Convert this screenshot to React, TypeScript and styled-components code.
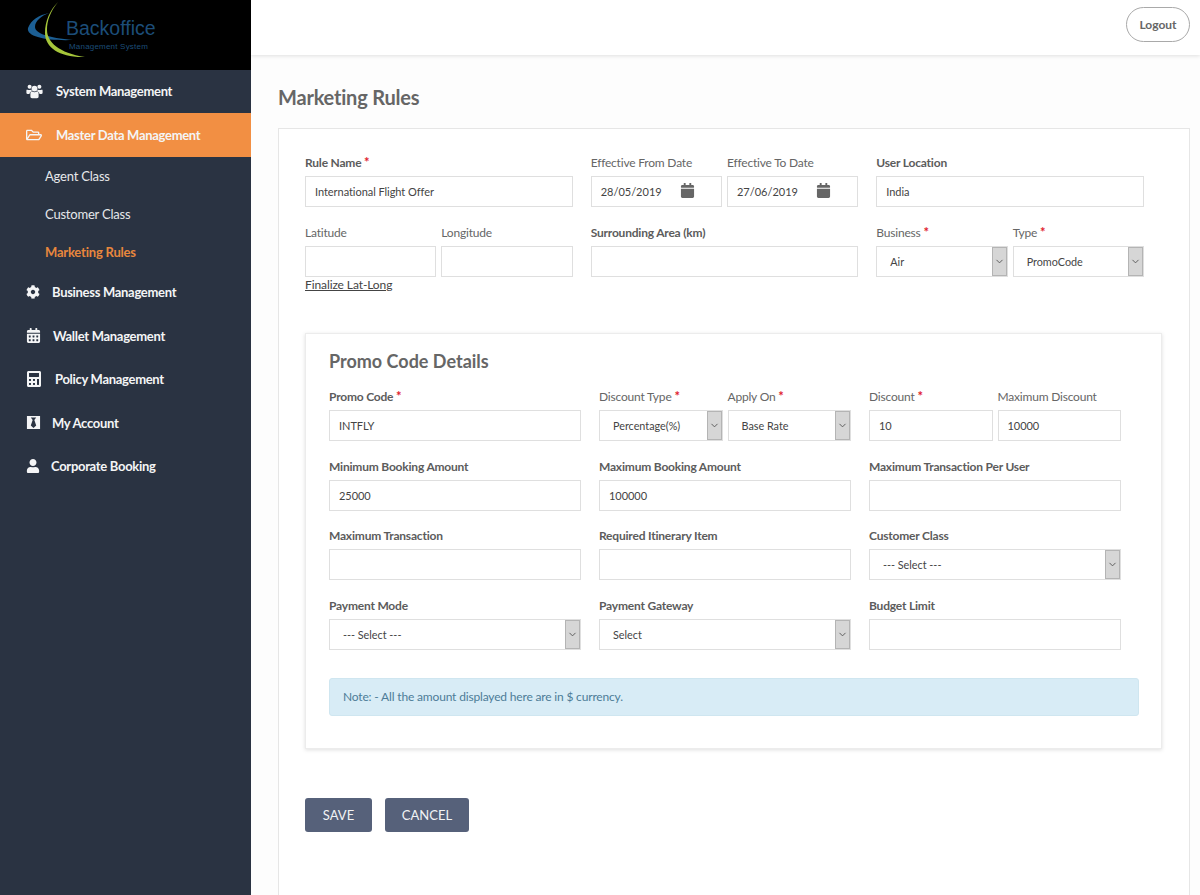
import React from "react";
import styled, { createGlobalStyle } from "styled-components";
import {
  FaRegFolderOpen,
  FaCog,
  FaCalendarAlt,
  FaCalculator,
  FaBlackTie,
  FaUser,
  FaCalendar,
} from "react-icons/fa";
import { LuChevronDown } from "react-icons/lu";

const GlobalStyle = createGlobalStyle`
  html, body {
    margin: 0;
    padding: 0;
    background: #fdfdfd;
    font-family: Lato, "Open Sans", sans-serif;
  }
  * { box-sizing: border-box; }
`;

const Page = styled.div`
  display: flex;
  width: 1200px;
  height: 895px;
  overflow: hidden;
`;

const Sidebar = styled.aside`
  width: 251px;
  flex: none;
  background: #2a3342;
`;

const Logo = styled.div`
  position: relative;
  height: 69.5px;
  background: #000;
  padding: 15px 0 0 66px;
`;

const LogoMark = styled.svg`
  position: absolute;
  left: 26px;
  top: 0;
`;

const LogoName = styled.div`
  font-family: "Liberation Sans", Arial, sans-serif;
  font-size: 19.5px;
  line-height: 27px;
  color: #1c4d78;
`;

const LogoSub = styled.div`
  font-family: "Liberation Sans", Arial, sans-serif;
  font-size: 8px;
  line-height: 10px;
  letter-spacing: 0.2px;
  margin: 0 0 0 3px;
  color: #1c4d78;
`;

const NavRow = styled.div<{ $active?: boolean; $gap: number }>`
  display: flex;
  align-items: center;
  height: 43.5px;
  padding-left: 26px;
  gap: ${(p) => p.$gap}px;
  font-size: 13px;
  font-weight: 700;
  letter-spacing: -0.3px;
  color: #f4f5f6;
  background: ${(p) => (p.$active ? "#f28f43" : "transparent")};

  svg {
    flex: none;
  }
`;

const SubItem = styled.div<{ $current?: boolean }>`
  height: 38px;
  line-height: 38px;
  padding-left: 45px;
  font-size: 13px;
  letter-spacing: -0.2px;
  font-weight: ${(p) => (p.$current ? 700 : 400)};
  color: ${(p) => (p.$current ? "#e8873d" : "#e6e8ea")};
`;

const Main = styled.main`
  flex: 1;
  min-width: 0;
  display: flex;
  flex-direction: column;
`;

const TopBar = styled.header`
  height: 55px;
  flex: none;
  display: flex;
  align-items: center;
  justify-content: flex-end;
  padding: 0 10px 0 0;
  background: #fff;
  box-shadow: 0 1px 4px rgba(0, 0, 0, 0.12);
`;

const LogoutButton = styled.button`
  width: 64px;
  height: 35px;
  padding: 0;
  margin-top: -7px;
  border: 1px solid #a9a9a9;
  border-radius: 18px;
  background: #fff;
  font-family: inherit;
  font-size: 12px;
  font-weight: 700;
  color: #666;
`;

const Content = styled.div`
  flex: 1;
  padding: 0 10px 0 27px;
`;

const Title = styled.h1`
  margin: 28px 0 17px;
  font-size: 20px;
  line-height: 28px;
  font-weight: 700;
  letter-spacing: -0.2px;
  color: #666;
`;

const Card = styled.section`
  height: 800px;
  padding: 24px 27px 0 26px;
  background: #fff;
  border: 1px solid #e6e6e6;
`;

const Grid = styled.div<{ $rowGap: number }>`
  display: grid;
  grid-template-columns: repeat(3, 1fr);
  column-gap: 18px;
  row-gap: ${(p) => p.$rowGap}px;
  padding-right: 18px;
`;

const Pair = styled.div`
  display: grid;
  grid-template-columns: 1fr 1fr;
  column-gap: 5px;
`;

const Field = styled.div`
  min-width: 0;
`;

const Label = styled.label<{ $strong?: boolean }>`
  display: block;
  height: 20px;
  margin-bottom: 3px;
  font-size: 12px;
  line-height: 20px;
  letter-spacing: -0.2px;
  white-space: nowrap;
  font-weight: ${(p) => (p.$strong ? 700 : 400)};
  color: ${(p) => (p.$strong ? "#5c5c5c" : "#666")};
`;

const Star = styled.span`
  font-size: 13px;
  line-height: 0;
  font-weight: 700;
  color: #e0202c;
`;

const TextInput = styled.input`
  display: block;
  width: 100%;
  height: 31px;
  padding: 0 9px;
  border: 1px solid #dfdfdf;
  border-radius: 0;
  outline: none;
  background: #fff;
  font-family: inherit;
  font-size: 11px;
  letter-spacing: -0.05px;
  color: #444;
`;

const DateBox = styled.div`
  display: flex;
  align-items: center;
  justify-content: space-between;
  height: 31px;
  padding: 0 26px 0 9px;
  border: 1px solid #dfdfdf;
  background: #fff;
  font-size: 11px;
  color: #444;

  svg {
    color: #666;
    margin-top: -2px;
  }
`;

const SelectBox = styled.div`
  display: flex;
  align-items: stretch;
  height: 31px;
  border: 1px solid #dfdfdf;
  background: #fff;
  font-size: 10.8px;
  color: #444;
`;

const SelectValue = styled.span`
  flex: 1;
  min-width: 0;
  padding-left: 13px;
  line-height: 29.5px;
  white-space: nowrap;
`;

const SelectArrow = styled.span`
  flex: none;
  width: 15px;
  display: flex;
  align-items: center;
  justify-content: center;
  background: #d6d6d6;
  border: 1px solid #b4b4b4;
  color: #555;
`;

const FinalizeLink = styled.a`
  display: block;
  font-size: 12px;
  line-height: 15px;
  letter-spacing: -0.1px;
  color: #444;
  text-decoration: underline;
`;

const Panel = styled.div`
  height: 416px;
  margin-top: 41px;
  padding: 13px 22px 0 23px;
  background: #fff;
  border: 1px solid #ececec;
  box-shadow: 0 1px 4px rgba(0, 0, 0, 0.13);
`;

const PanelTitle = styled.h2`
  margin: 0 0 12px;
  font-size: 18px;
  line-height: 28px;
  font-weight: 700;
  color: #666;
`;

const Note = styled.div`
  height: 38px;
  margin-top: 28px;
  padding-left: 13px;
  line-height: 36px;
  font-size: 12px;
  letter-spacing: -0.17px;
  color: #4d7c98;
  background: #d8ecf6;
  border: 1px solid #cfe6f0;
  border-radius: 3px;
`;

const Actions = styled.div`
  display: flex;
  gap: 13px;
  margin-top: 49px;
`;

const ActionButton = styled.button<{ $width: number }>`
  width: ${(p) => p.$width}px;
  height: 34px;
  padding: 0;
  border: none;
  border-radius: 3px;
  background: #56617a;
  font-family: inherit;
  font-size: 13px;
  color: #f2f3f5;
`;

const Required = () => <Star>*</Star>;

const UsersIcon = () => (
  <svg width="17" height="15" viewBox="0 0 17 15" fill="currentColor">
    <circle cx="8.5" cy="4.6" r="2.9" />
    <path d="M4.4 9.4C4.4 8.3 5.2 7.7 6.1 7.6C7.5 8.6 9.5 8.6 10.9 7.6C11.8 7.7 12.6 8.3 12.6 9.4V12.6C12.6 13.6 12 14.2 11 14.2H6C5 14.2 4.4 13.6 4.4 12.6Z" />
    <circle cx="3.6" cy="2.7" r="2" />
    <circle cx="13.4" cy="2.7" r="2" />
    <path d="M1 5.4C1.8 6.2 4.4 6.3 5.4 5.4C5.4 6.2 5.7 6.8 6 7.2C4.4 7.6 3.6 8.4 3.5 10H1.5C0.7 10 0.4 9.5 0.4 8.8V6.6C0.4 6 0.6 5.6 1 5.4Z" />
    <path d="M16 5.4C15.2 6.2 12.6 6.3 11.6 5.4C11.6 6.2 11.3 6.8 11 7.2C12.6 7.6 13.4 8.4 13.5 10H15.5C16.3 10 16.6 9.5 16.6 8.8V6.6C16.6 6 16.4 5.6 16 5.4Z" />
  </svg>
);

const Select = ({ value }: { value: string }) => (
  <SelectBox>
    <SelectValue>{value}</SelectValue>
    <SelectArrow>
      <LuChevronDown size={11} />
    </SelectArrow>
  </SelectBox>
);

const DateField = ({ label, value }: { label: string; value: string }) => (
  <Field>
    <Label>{label}</Label>
    <DateBox>
      {value}
      <FaCalendar size={15} />
    </DateBox>
  </Field>
);

function App() {
  return (
    <Page>
      <GlobalStyle />
      <Sidebar>
        <Logo>
          <LogoMark width="60" height="60" viewBox="0 0 60 60">
            <path d="M2 28C5 20 13 15 23 13C15 16 9 21 9 27C9 33 22 38 47 40C22 41 0 37 2 28Z" fill="#1c5f94" />
            <path d="M32 2C24 12 21 21 21 30C21 42 33 53 59 57C35 58 19 48 19 33C19 21 24 10 32 2Z" fill="#a6c63a" />
          </LogoMark>
          <LogoName>Backoffice</LogoName>
          <LogoSub>Management System</LogoSub>
        </Logo>
        <NavRow $gap={13}>
          <UsersIcon />
          System Management
        </NavRow>
        <NavRow $active $gap={14}>
          <FaRegFolderOpen size={16} />
          Master Data Management
        </NavRow>
        <SubItem>Agent Class</SubItem>
        <SubItem>Customer Class</SubItem>
        <SubItem $current>Marketing Rules</SubItem>
        <NavRow $gap={12}>
          <FaCog size={14} />
          Business Management
        </NavRow>
        <NavRow $gap={12}>
          <FaCalendarAlt size={15} />
          Wallet Management
        </NavRow>
        <NavRow $gap={13}>
          <FaCalculator size={16} />
          Policy Management
        </NavRow>
        <NavRow $gap={11}>
          <FaBlackTie size={15} />
          My Account
        </NavRow>
        <NavRow $gap={11}>
          <FaUser size={14} />
          Corporate Booking
        </NavRow>
      </Sidebar>
      <Main>
        <TopBar>
          <LogoutButton>Logout</LogoutButton>
        </TopBar>
        <Content>
          <Title>Marketing Rules</Title>
          <Card>
            <Grid $rowGap={16}>
              <Field>
                <Label $strong>
                  Rule Name <Required />
                </Label>
                <TextInput defaultValue="International Flight Offer" />
              </Field>
              <Pair>
                <DateField label="Effective From Date" value="28/05/2019" />
                <DateField label="Effective To Date" value="27/06/2019" />
              </Pair>
              <Field>
                <Label $strong>User Location</Label>
                <TextInput defaultValue="India" />
              </Field>
              <Field>
                <Pair>
                  <Field>
                    <Label>Latitude</Label>
                    <TextInput />
                  </Field>
                  <Field>
                    <Label>Longitude</Label>
                    <TextInput />
                  </Field>
                </Pair>
                <FinalizeLink>Finalize Lat-Long</FinalizeLink>
              </Field>
              <Field>
                <Label $strong>Surrounding Area (km)</Label>
                <TextInput />
              </Field>
              <Pair>
                <Field>
                  <Label>
                    Business <Required />
                  </Label>
                  <Select value="Air" />
                </Field>
                <Field>
                  <Label>
                    Type <Required />
                  </Label>
                  <Select value="PromoCode" />
                </Field>
              </Pair>
            </Grid>
            <Panel>
              <PanelTitle>Promo Code Details</PanelTitle>
              <Grid $rowGap={15.5}>
                <Field>
                  <Label $strong>
                    Promo Code <Required />
                  </Label>
                  <TextInput defaultValue="INTFLY" />
                </Field>
                <Pair>
                  <Field>
                    <Label>
                      Discount Type <Required />
                    </Label>
                    <Select value="Percentage(%)" />
                  </Field>
                  <Field>
                    <Label>
                      Apply On <Required />
                    </Label>
                    <Select value="Base Rate" />
                  </Field>
                </Pair>
                <Pair>
                  <Field>
                    <Label>
                      Discount <Required />
                    </Label>
                    <TextInput defaultValue="10" />
                  </Field>
                  <Field>
                    <Label>Maximum Discount</Label>
                    <TextInput defaultValue="10000" />
                  </Field>
                </Pair>
                <Field>
                  <Label $strong>Minimum Booking Amount</Label>
                  <TextInput defaultValue="25000" />
                </Field>
                <Field>
                  <Label $strong>Maximum Booking Amount</Label>
                  <TextInput defaultValue="100000" />
                </Field>
                <Field>
                  <Label $strong>Maximum Transaction Per User</Label>
                  <TextInput />
                </Field>
                <Field>
                  <Label $strong>Maximum Transaction</Label>
                  <TextInput />
                </Field>
                <Field>
                  <Label $strong>Required Itinerary Item</Label>
                  <TextInput />
                </Field>
                <Field>
                  <Label $strong>Customer Class</Label>
                  <Select value="--- Select ---" />
                </Field>
                <Field>
                  <Label $strong>Payment Mode</Label>
                  <Select value="--- Select ---" />
                </Field>
                <Field>
                  <Label $strong>Payment Gateway</Label>
                  <Select value="Select" />
                </Field>
                <Field>
                  <Label $strong>Budget Limit</Label>
                  <TextInput />
                </Field>
              </Grid>
              <Note>Note: - All the amount displayed here are in $ currency.</Note>
            </Panel>
            <Actions>
              <ActionButton $width={67}>SAVE</ActionButton>
              <ActionButton $width={84}>CANCEL</ActionButton>
            </Actions>
          </Card>
        </Content>
      </Main>
    </Page>
  );
}

export default App;
